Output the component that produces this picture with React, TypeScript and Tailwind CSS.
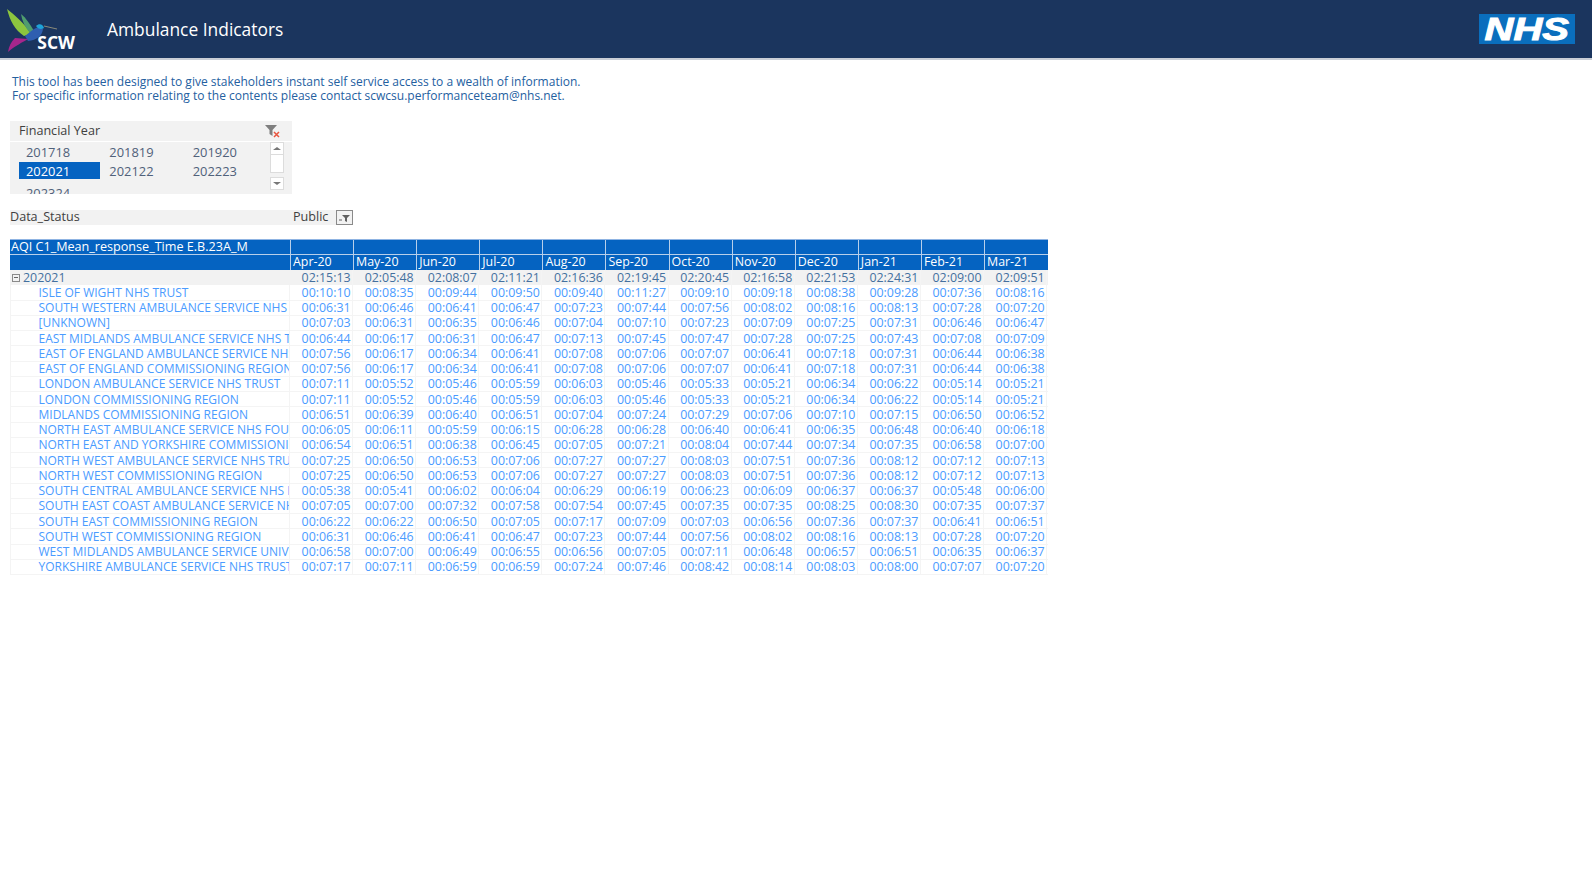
import React from 'react';

const months = ['Apr-20', 'May-20', 'Jun-20', 'Jul-20', 'Aug-20', 'Sep-20', 'Oct-20', 'Nov-20', 'Dec-20', 'Jan-21', 'Feb-21', 'Mar-21'];

const totals = ['02:15:13', '02:05:48', '02:08:07', '02:11:21', '02:16:36', '02:19:45', '02:20:45', '02:16:58', '02:21:53', '02:24:31', '02:09:00', '02:09:51'];

const rows: { name: string; values: string }[] = [
  { name: 'ISLE OF WIGHT NHS TRUST', values: '10:10 08:35 09:44 09:50 09:40 11:27 09:10 09:18 08:38 09:28 07:36 08:16' },
  { name: 'SOUTH WESTERN AMBULANCE SERVICE NHS FOUNDATION TRUST', values: '06:31 06:46 06:41 06:47 07:23 07:44 07:56 08:02 08:16 08:13 07:28 07:20' },
  { name: '[UNKNOWN]', values: '07:03 06:31 06:35 06:46 07:04 07:10 07:23 07:09 07:25 07:31 06:46 06:47' },
  { name: 'EAST MIDLANDS AMBULANCE SERVICE NHS TRUST', values: '06:44 06:17 06:31 06:47 07:13 07:45 07:47 07:28 07:25 07:43 07:08 07:09' },
  { name: 'EAST OF ENGLAND AMBULANCE SERVICE NHS TRUST', values: '07:56 06:17 06:34 06:41 07:08 07:06 07:07 06:41 07:18 07:31 06:44 06:38' },
  { name: 'EAST OF ENGLAND COMMISSIONING REGION', values: '07:56 06:17 06:34 06:41 07:08 07:06 07:07 06:41 07:18 07:31 06:44 06:38' },
  { name: 'LONDON AMBULANCE SERVICE NHS TRUST', values: '07:11 05:52 05:46 05:59 06:03 05:46 05:33 05:21 06:34 06:22 05:14 05:21' },
  { name: 'LONDON COMMISSIONING REGION', values: '07:11 05:52 05:46 05:59 06:03 05:46 05:33 05:21 06:34 06:22 05:14 05:21' },
  { name: 'MIDLANDS COMMISSIONING REGION', values: '06:51 06:39 06:40 06:51 07:04 07:24 07:29 07:06 07:10 07:15 06:50 06:52' },
  { name: 'NORTH EAST AMBULANCE SERVICE NHS FOUNDATION TRUST', values: '06:05 06:11 05:59 06:15 06:28 06:28 06:40 06:41 06:35 06:48 06:40 06:18' },
  { name: 'NORTH EAST AND YORKSHIRE COMMISSIONING REGION', values: '06:54 06:51 06:38 06:45 07:05 07:21 08:04 07:44 07:34 07:35 06:58 07:00' },
  { name: 'NORTH WEST AMBULANCE SERVICE NHS TRUST', values: '07:25 06:50 06:53 07:06 07:27 07:27 08:03 07:51 07:36 08:12 07:12 07:13' },
  { name: 'NORTH WEST COMMISSIONING REGION', values: '07:25 06:50 06:53 07:06 07:27 07:27 08:03 07:51 07:36 08:12 07:12 07:13' },
  { name: 'SOUTH CENTRAL AMBULANCE SERVICE NHS FOUNDATION TRUST', values: '05:38 05:41 06:02 06:04 06:29 06:19 06:23 06:09 06:37 06:37 05:48 06:00' },
  { name: 'SOUTH EAST COAST AMBULANCE SERVICE NHS FOUNDATION TRUST', values: '07:05 07:00 07:32 07:58 07:54 07:45 07:35 07:35 08:25 08:30 07:35 07:37' },
  { name: 'SOUTH EAST COMMISSIONING REGION', values: '06:22 06:22 06:50 07:05 07:17 07:09 07:03 06:56 07:36 07:37 06:41 06:51' },
  { name: 'SOUTH WEST COMMISSIONING REGION', values: '06:31 06:46 06:41 06:47 07:23 07:44 07:56 08:02 08:16 08:13 07:28 07:20' },
  { name: 'WEST MIDLANDS AMBULANCE SERVICE UNIVERSITY NHS FOUNDATION TRUST', values: '06:58 07:00 06:49 06:55 06:56 07:05 07:11 06:48 06:57 06:51 06:35 06:37' },
  { name: 'YORKSHIRE AMBULANCE SERVICE NHS TRUST', values: '07:17 07:11 06:59 06:59 07:24 07:46 08:42 08:14 08:03 08:00 07:07 07:20' },
];

const years = ['201718', '201819', '201920', '202021', '202122', '202223'];

const Hummingbird = () => (
  <svg width="52" height="48" viewBox="0 0 52 48" className="shrink-0">
    <path d="M0 4 C6 9 17 17 24 29 L17 31 C8 25 3 16 0 4Z" fill="#8cc63f" />
    <path d="M14 9 C19 13 23 19 27 26 L23 28 C18 22 15 16 14 9Z" fill="#4f9d6e" />
    <path d="M18 31 C23 27 26 24 31 22 L36 24 C35 31 30 35 21 36Z" fill="#2f5fb0" />
    <path d="M29 21 C32 18 36 19 37 23 C34 25 31 24 29 21Z" fill="#1ea3d8" />
    <path d="M37 21 L50 24" stroke="#8a8a7a" strokeWidth="1" />
    <path d="M8 33 L21 34 C16 37 8 41 1 47 C2 41 4 37 8 33Z" fill="#a6268c" />
  </svg>
);

const FilterClear = () => (
  <svg width="16" height="14" viewBox="0 0 16 14">
    <path d="M0 1 H12 L7.5 6 V12 L4.5 10 V6Z" fill="#7f7f7f" />
    <path d="M9 8 L14 13 M14 8 L9 13" stroke="#e8553f" strokeWidth="1.5" />
  </svg>
);

const Time = ({ value, dark }: { value: string; dark?: boolean }) => (
  <div className={`w-[63.1px] shrink-0 border-r border-[#f4f4f4] pr-[1.5px] text-right ${dark ? 'text-[#44709f]' : 'text-[#4a9bff]'}`}>{value}</div>
);

export default function App() {
  return (
    <div className="min-h-[893px] bg-white font-['Open_Sans',sans-serif]">
      <header className="flex h-[60px] items-center justify-between border-b-2 border-[#c9ced6] bg-[#1b355e] pl-[7px] pr-[17px]">
        <div className="flex items-center">
          <div className="relative h-[48px] w-[68px]">
            <Hummingbird />
            <span className="absolute bottom-[2px] right-0 text-[17.5px] font-bold leading-none text-white">SCW</span>
          </div>
          <h1 className="ml-[32px] text-[17.4px] text-white">Ambulance Indicators</h1>
        </div>
        <div className="flex h-[30px] w-[96px] items-center justify-center bg-[#0a6ebd] text-[32px] font-bold italic leading-none text-white font-['Liberation_Sans',sans-serif]">
          <span className="scale-x-[1.25] [-webkit-text-stroke:1px_white]">NHS</span>
        </div>
      </header>

      <div className="pl-[12px] pt-[15px] text-[12px] leading-[13.5px] text-[#24609f]">
        <p>This tool has been designed to give stakeholders instant self service access to a wealth of information.</p>
        <p>For specific information relating to the contents please contact scwcsu.performanceteam@nhs.net.</p>
      </div>

      <section className="ml-[10px] mt-[19px] h-[73px] w-[282px] overflow-hidden bg-[#f2f2f2] text-[12.6px] text-[#404040]">
        <div className="flex h-[21px] items-center justify-between border-b border-white pl-[9px] pr-[11px]">
          <span>Financial Year</span>
          <FilterClear />
        </div>
        <div className="flex">
          <div className="ml-[9px] grid w-[250px] grid-cols-3 content-start gap-y-[1px] pt-[1px] text-[12.9px] text-[#50617a]">
            {years.map((year) => (
              <div key={year} className={`h-[17.5px] w-[81px] pl-[7px] leading-[18px] ${year === '202021' ? 'bg-[#0563c1] text-white' : ''}`}>
                {year}
              </div>
            ))}
            <div className="h-[17.5px] w-[82px] pl-[7px] pt-[4px] leading-[18px]">202324</div>
          </div>
          <div className="ml-[1px] flex h-[48px] w-[14px] flex-col">
            <div className="flex h-[13px] items-center justify-center border border-[#dcdcdc] bg-white">
              <div className="h-0 w-0 border-x-[4px] border-b-[3px] border-x-transparent border-b-[#777]" />
            </div>
            <div className="mb-[4px] h-[18px] border border-t-0 border-[#dcdcdc] bg-white" />
            <div className="flex h-[13px] items-center justify-center border border-[#dcdcdc] bg-white">
              <div className="h-0 w-0 border-x-[4px] border-t-[3px] border-x-transparent border-t-[#777]" />
            </div>
          </div>
        </div>
      </section>

      <div className="ml-[10px] mt-[16px] flex h-[15px] w-[343px] items-center bg-[#f2f2f2] text-[12.6px] text-[#404040]">
        <span className="w-[283px]">Data_Status</span>
        <span>Public</span>
        <div className="ml-auto flex h-[15px] w-[17px] items-center justify-center border border-[#8a8a8a] bg-[#f2f2f2]">
          <svg width="11" height="8" viewBox="0 0 11 8">
            <path d="M3 1 H11 L8 4 V8 L6 7 V4Z" fill="#606060" />
            <path d="M0 6 H3" stroke="#606060" />
          </svg>
        </div>
      </div>

      <section className="ml-[10px] mt-[14px] w-[1038px] text-[12.4px]">
        <div className="flex h-[15px] items-center border-t border-[#8fb4e3] bg-[#0563c1] text-white">
          <div className="w-[280px] shrink-0 overflow-hidden whitespace-nowrap pl-[1px] text-[12.6px]">AQI C1_Mean_response_Time E.B.23A_M</div>
          {months.map((month) => (
            <div key={month} className="h-full w-[63.1px] shrink-0 border-l border-[#b8cfea]" />
          ))}
        </div>
        <div className="flex h-[16px] items-center border-t border-[#b8cfea] bg-[#0563c1] text-white">
          <div className="w-[280px] shrink-0" />
          {months.map((month) => (
            <div key={month} className="h-full w-[63.1px] shrink-0 border-l border-[#b8cfea] pl-[2px] leading-[14px]">{month}</div>
          ))}
        </div>
        <div className="flex h-[15.25px] items-center bg-[#f2f2f2] leading-[15px]">
          <div className="flex w-[280px] shrink-0 items-center pl-[2px] text-[#44709f]">
            <div className="mr-[3px] flex h-[8px] w-[8px] items-center justify-center border border-[#8a8a8a]">
              <div className="h-[1px] w-[4px] bg-[#666]" />
            </div>
            202021
          </div>
          {totals.map((total) => (
            <Time key={total} value={total} dark />
          ))}
        </div>
        {rows.map((row) => (
          <div key={row.name} className="flex h-[15.25px] items-center border-b border-[#f4f4f4] leading-[15px]">
            <div className="w-[280px] shrink-0 overflow-hidden whitespace-nowrap border-x border-[#f4f4f4] pl-[27.5px] text-[12px] text-[#4a9bff]">{row.name}</div>
            {row.values.split(' ').map((value, i) => (
              <Time key={i} value={`00:${value}`} />
            ))}
          </div>
        ))}
      </section>
    </div>
  );
}
